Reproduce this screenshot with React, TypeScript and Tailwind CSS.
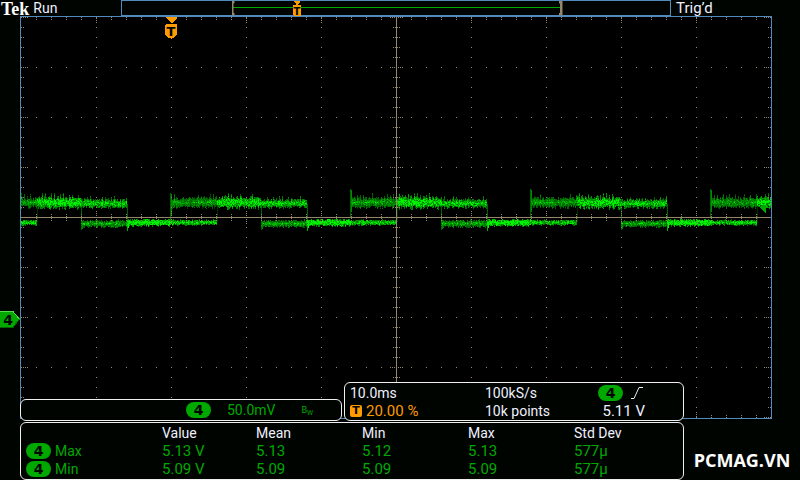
interface Segment {
    from: number
    to: number
    center: number
    spread: number
    level: number
}

interface Measurement {
    id: number
    name: string
    value: string
    mean: string
    min: string
    max: string
    stdDev: string
}

const measurements: Measurement[] = [
    { id: 1, name: "Max", value: "5.13 V", mean: "5.13", min: "5.12", max: "5.13", stdDev: "577µ" },
    { id: 2, name: "Min", value: "5.09 V", mean: "5.09", min: "5.09", max: "5.09", stdDev: "577µ" },
];

const shades = ["#003200", "#006400", "#008c00", "#00b800", "#00f400"];

const LEFT = 21;
const RIGHT = 771;

// One period is 180 units wide, two acquisitions overlap in it
function buildSegments() {
    const segments: Segment[] = [];
    for (let x = -9; x < RIGHT; x += 180) {
        segments.push(
            { from: x, to: x + 46, center: 202, spread: 6, level: 0.7 },
            { from: x + 46, to: x + 90, center: 202, spread: 7, level: 1.15 },
            { from: x + 90, to: x + 136, center: 203, spread: 5, level: 0.95 },
            { from: x, to: x + 46, center: 222, spread: 3, level: 1 },
            { from: x + 90, to: x + 136, center: 223, spread: 4, level: 0.75 },
            { from: x + 136, to: x + 180, center: 222, spread: 4, level: 1.3 }
        );
    }
    return segments;
}

function buildTrace() {
    const paths = ["", "", "", "", ""];
    let seed = 7;
    const random = () => {
        seed = (seed * 1103515245 + 12345) % 2147483648;
        return seed / 2147483648;
    };
    const dot = (x: number, y: number, shade: number, height = 1) => {
        if (x >= LEFT && x < RIGHT) {
            paths[shade] += `M${x} ${y}h1v${height}h-1z`;
        }
    };

    for (const s of buildSegments()) {
        const upper = s.center < 210;
        for (let x = s.from; x < s.to; x++) {
            // Ripple on the high level alternates every few samples
            const ripple = upper && x % 3 === 0 ? 1.3 : 0.8;
            const top = Math.min(s.spread * (0.4 + random() * 0.7) * ripple, upper ? 9 : 4);
            const bottom = s.spread * (0.4 + random() * 0.6);
            for (let dy = -Math.round(top); dy <= Math.round(bottom); dy++) {
                const reach = Math.abs(dy) / ((dy < 0 ? top : bottom) + 2);
                const value = s.level * (1.05 - reach * 0.8) * (0.4 + random() * 0.8);
                const shade = Math.min(4, Math.floor(value * 5));
                dot(x, s.center + dy, shade);
            }
        }
    }

    for (let x = -9; x < RIGHT; x += 180) {
        const spike = x === 171 || x < 0 ? 193 : 189;
        dot(x - 1, spike, 1, 28);
        dot(x, spike + 1, 2, 22);
        dot(x + 46, 204, 0, 18);
        dot(x + 90, 206, 1, 24);
        dot(x + 91, 222, 2, 7);
        dot(x + 136, 204, 1, 18);
        dot(x + 136, 222, 3, 9);
        dot(x + 137, 222, 4, 6);
    }
    return paths;
}

function buildGraticule() {
    let d = "";
    const dot = (x: number, y: number) => {
        if (x >= LEFT && x < RIGHT && y >= 17 && y < 418) {
            d += `M${x} ${y}h1v1h-1z`;
        }
    };

    for (let y = 17; y <= 417; y += 10) {
        const major = (y - 17) % 50 === 0;
        for (let x = 96; x < RIGHT; x += 75) dot(x, y);
        const ticks = major ? [2, 4, 6] : [2];
        dot(21, y);
        dot(770, y);
        ticks.forEach((t) => {
            dot(21 + t, y);
            dot(770 - t, y);
        });
        (major ? [2, 4, 6] : [1, 3]).forEach((t) => {
            dot(396 - t, y);
            dot(396 + t, y);
        });
    }
    for (let x = 36; x < RIGHT; x += 15) {
        const major = (x - 21) % 75 === 0;
        for (let y = 67; y < 418; y += 50) dot(x, y);
        (major ? [1, 3, 5] : [0, 2]).forEach((t) => {
            dot(x, 17 + t);
            dot(x, 417 - t);
        });
        (major ? [2, 4, 6] : [1, 3]).forEach((t) => {
            dot(x, 217 - t);
            dot(x, 217 + t);
        });
    }
    return d;
}

const trace = buildTrace();
const graticule = buildGraticule();

function ChannelBadge() {
    return (
        <span className="inline-flex h-4 w-[25px] items-center justify-center rounded-full bg-[#00a800] font-['DejaVu_Sans'] text-[14px] leading-4 font-bold text-[#000400]">
            4
        </span>
    );
}

function Overview() {
    return (
        <svg viewBox="0 0 550 16" className="block h-auto min-w-0 flex-1" shapeRendering="crispEdges">
            <rect x="0.5" y="0.5" width="549" height="15" fill="#000400" stroke="#528abd" />
            <path d="M112 7h329v1h-329z" fill="#00a800" />
            <path d="M113 1h-2v14h2v-2h-1v-10h1zM438 1h3v14h-3v-2h1v-10h-1z" fill="#94866b" stroke="#94866b" strokeWidth="0.5" />
            <path d="M173 1h6v1l-2 2v1h3v1h-8v-1h3v-1l-2-2z" fill="#ff9a00" />
            <path d="M172 6h8v9l-1 1h-6l-1-1z" fill="#ff9a00" />
            <text x="176" y="15" textAnchor="middle" fontFamily="DejaVu Sans" fontSize="10" fontWeight="bold" fill="#000400">T</text>
        </svg>
    );
}

function Plot() {
    return (
        <svg viewBox="0 16 800 403" className="block h-auto w-full" shapeRendering="crispEdges">
            <rect x="20.5" y="16.5" width="751" height="402" fill="#000000" stroke="#528abd" />
            {trace.map((d, index) => (
                <path key={index} d={d} fill={shades[index]} />
            ))}
            <path d={graticule} fill="#94866b" />
            <path d="M396 17h1v401h-1zM21 217h750v1h-750z" fill="#94866b" />

            {/* Trigger position */}
            <path d="M166 17h11v1l-5 5h-1l-5-5z" fill="#ff9a00" />
            <path d="M166 24h10l1 1v10l-4 3h-1l-1 1l-1-1h-1l-4-3v-10z" fill="#ff9a00" />
            <text x="171" y="36" textAnchor="middle" fontFamily="DejaVu Sans" fontSize="13" fontWeight="bold" fill="#000400">T</text>

            {/* Trigger level */}
            <path d="M760 207l2-2h4v8h-1zM766 207h5v1h-5z" fill="#00a800" />

            {/* Channel reference */}
            <path d="M0 311h13l7 8l-7 9h-13z" fill="#00a800" />
            <path d="M0 311.500h13l6 7" stroke="#52dc52" fill="none" />
            <path d="M0 327.500h13l6-8" stroke="#006800" fill="none" />
            <text x="8" y="325" textAnchor="middle" fontFamily="DejaVu Sans" fontSize="14" fontWeight="bold" fill="#000400">4</text>
        </svg>
    );
}

export default function App() {
    return (
        <div className="min-h-screen bg-[#000400] font-['Roboto',sans-serif] text-[15px] leading-[18px] font-normal text-[#f0f0ff]">
            <header className="flex items-start">
                <div className="flex h-4 w-[121px] items-start gap-1 pl-px text-[14px] leading-4">
                    <span className="font-['Liberation_Serif',serif] text-[18px] leading-[18px] font-bold text-white">Tek</span>
                    <span>Run</span>
                </div>
                <Overview />
                <div className="h-4 w-[129px] pl-[5px] leading-4">Trig’d</div>
            </header>

            <Plot />

            <footer className="relative -mt-[37px] flex items-end pl-5">
                <div className="flex min-w-0 flex-1 flex-col gap-px">
                    <div className="flex items-end gap-[2px]">
                        <section className="flex h-[22px] flex-1 items-center rounded-md border border-[#f0f0f0] bg-[#000400] pr-7 pl-[165px] text-[#00a800]">
                            <ChannelBadge />
                            <span className="ml-4 text-[14px]">50.0mV</span>
                            <span className="ml-auto text-[9px] leading-4">
                                B<sub>W</sub>
                            </span>
                        </section>
                        <section className="grid w-[340px] grid-cols-[135px_1fr_auto] rounded-md border border-[#f0f0f0] bg-[#000400] pt-px pr-[38px] pl-[5px]">
                            <span className="text-[14px]">10.0ms</span>
                            <span className="text-[14px]">100kS/s</span>
                            <span className="flex items-center justify-end gap-2">
                                <ChannelBadge />
                                <svg width="14" height="12" viewBox="0 0 14 12" fill="none" stroke="#f0f0ff">
                                    <path d="M0 11.500h3l5-11h4" />
                                </svg>
                            </span>
                            <span className="flex items-center gap-1 text-[#ff9a00]">
                                <span className="inline-flex h-3 w-3 items-center justify-center rounded-xs bg-[#ff9a00] font-['DejaVu_Sans'] text-[11px] leading-3 font-bold text-[#000400]">
                                    T
                                </span>
                                20.00 %
                            </span>
                            <span className="text-[14px]">10k points</span>
                            <span className="text-right">5.11 V</span>
                        </section>
                    </div>

                    <section className="rounded-md border border-[#f0f0f0] bg-[#000400] py-px">
                        <table className="w-full table-fixed text-left">
                            <thead className="text-[14px]">
                                <tr className="h-[18px]">
                                    <th className="w-[141px] p-0"></th>
                                    <th className="w-[94px] p-0 font-normal">Value</th>
                                    <th className="w-[106px] p-0 font-normal">Mean</th>
                                    <th className="w-[106px] p-0 font-normal">Min</th>
                                    <th className="w-[106px] p-0 font-normal">Max</th>
                                    <th className="p-0 font-normal">Std Dev</th>
                                </tr>
                            </thead>
                            <tbody className="text-[#00a800]">
                                {measurements.map((item: Measurement) => (
                                    <tr className="h-[18px]" key={item.id}>
                                        <th className="p-0 text-[14px] leading-[18px] font-normal">
                                            <div className="flex items-center gap-1 pl-[5px]">
                                                <ChannelBadge />
                                                {item.name}
                                            </div>
                                        </th>
                                        <td className="p-0">{item.value}</td>
                                        <td className="p-0">{item.mean}</td>
                                        <td className="p-0">{item.min}</td>
                                        <td className="p-0">{item.max}</td>
                                        <td className="p-0">{item.stdDev}</td>
                                    </tr>
                                ))}
                            </tbody>
                        </table>
                    </section>
                </div>
                <div className="w-[116px] pb-2.5 text-center font-['Open_Sans',sans-serif] text-[18px] leading-5 font-bold text-white">
                    PCMAG.VN
                </div>
            </footer>
        </div>
    );
}
